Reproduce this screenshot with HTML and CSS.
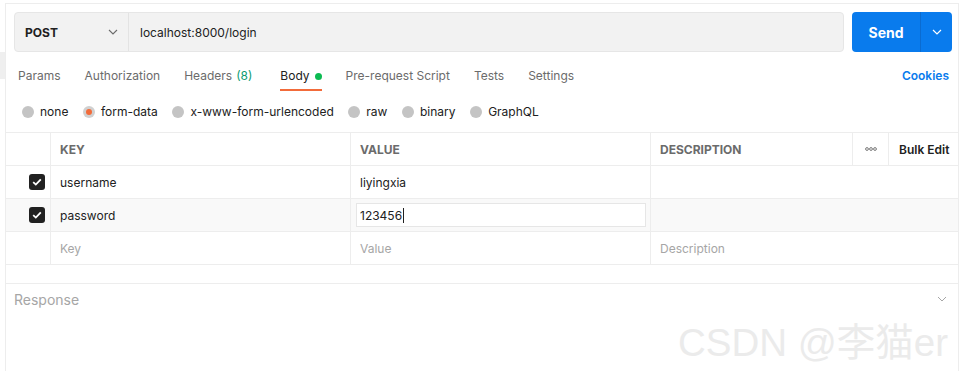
FILE: index.html
```html
<!DOCTYPE html>
<html lang="en">
<head>
<meta charset="utf-8">
<title>Postman request</title>
<link rel="stylesheet" href="styles.css">
</head>
<body>
<div class="app">
  <aside class="gutter"><div class="gutter-block"></div></aside>
  <main class="panel">
    <div class="url-row">
      <div class="url-bar">
        <div class="method">
          <span class="method-label">POST</span>
          <svg class="chev" width="10" height="6" viewBox="0 0 10 6"><path d="M1 1l4 4 4-4" fill="none" stroke="#6b6b6b" stroke-width="1.1"/></svg>
        </div>
        <div class="url">localhost:8000/login</div>
      </div>
      <div class="send">
        <span class="send-label">Send</span>
        <span class="send-arrow"><svg width="10" height="6" viewBox="0 0 10 6"><path d="M1 1l4 4 4-4" fill="none" stroke="#ffffff" stroke-width="1.2"/></svg></span>
      </div>
    </div>

    <nav class="tabs">
      <span class="tab">Params</span>
      <span class="tab">Authorization</span>
      <span class="tab tab-count">Headers <span class="count">(8)</span></span>
      <span class="tab tab-active">Body <span class="dot"></span></span>
      <span class="tab">Pre-request Script</span>
      <span class="tab">Tests</span>
      <span class="tab">Settings</span>
      <span class="cookies">Cookies</span>
    </nav>

    <div class="body-types">
      <label class="radio"><span class="circle"></span>none</label>
      <label class="radio"><span class="circle circle-on"></span>form-data</label>
      <label class="radio"><span class="circle"></span>x-www-form-urlencoded</label>
      <label class="radio"><span class="circle"></span>raw</label>
      <label class="radio"><span class="circle"></span>binary</label>
      <label class="radio"><span class="circle"></span>GraphQL</label>
    </div>

    <div class="kv">
      <div class="cell head"></div>
      <div class="cell head">KEY</div>
      <div class="cell head">VALUE</div>
      <div class="cell head">DESCRIPTION</div>
      <div class="cell head more">
        <svg width="12" height="4" viewBox="0 0 12 4"><circle cx="2" cy="2" r="1.4" fill="none" stroke="#6b6b6b" stroke-width="0.9"/><circle cx="6" cy="2" r="1.4" fill="none" stroke="#6b6b6b" stroke-width="0.9"/><circle cx="10" cy="2" r="1.4" fill="none" stroke="#6b6b6b" stroke-width="0.9"/></svg>
      </div>
      <div class="cell head bulk">Bulk Edit</div>

      <div class="cell check"><span class="box"><svg width="10" height="8" viewBox="0 0 10 8"><path d="M1.2 4.2l2.6 2.4L8.8 1.3" fill="none" stroke="#fff" stroke-width="1.8"/></svg></span></div>
      <div class="cell">username</div>
      <div class="cell">liyingxia</div>
      <div class="cell wide"></div>

      <div class="cell check hover"><span class="box"><svg width="10" height="8" viewBox="0 0 10 8"><path d="M1.2 4.2l2.6 2.4L8.8 1.3" fill="none" stroke="#fff" stroke-width="1.8"/></svg></span></div>
      <div class="cell hover">password</div>
      <div class="cell hover edit"><span class="input">123456<span class="caret"></span></span></div>
      <div class="cell wide hover"></div>

      <div class="cell"></div>
      <div class="cell ph">Key</div>
      <div class="cell ph">Value</div>
      <div class="cell wide ph">Description</div>
    </div>

    <div class="spacer"></div>

    <section class="response">
      <span class="response-label">Response</span>
      <svg width="10" height="6" viewBox="0 0 10 6"><path d="M1 1l4 4 4-4" fill="none" stroke="#a6a6a6" stroke-width="1"/></svg>
    </section>
  </main>
  <div class="watermark">CSDN @李猫er</div>
</div>
</body>
</html>
```

FILE: styles.css
```css
* { box-sizing: border-box; }
html, body { margin: 0; padding: 0; background: #ffffff; }
body {
  font-family: Inter, "Noto Sans", sans-serif;
  font-size: 12px;
  color: #212121;
  width: 965px;
  height: 371px;
  overflow: hidden;
}
.app { display: flex; position: relative; height: 371px; }
.gutter { width: 5px; flex: none; }
.gutter-block { margin-top: 52px; height: 27px; background: #efefef; }

.panel {
  width: 954px;
  flex: none;
  margin-top: 3px;
  border-top: 1px solid #ededed;
  border-left: 1px solid #ededed;
  border-right: 1px solid #ededed;
  display: flex;
  flex-direction: column;
}

.url-row { display: flex; gap: 8px; padding: 8px 6px 0 8px; }
.url-bar {
  flex: 1;
  height: 40px;
  display: flex;
  background: #f2f2f2;
  border: 1px solid #e6e6e6;
  border-radius: 4px;
}
.method {
  width: 114px;
  display: flex;
  align-items: center;
  justify-content: space-between;
  padding: 0 10px 0 10px;
  border-right: 1px solid #e3e3e3;
}
.method-label { font-weight: 700; font-size: 12px; color: #212121; }
.url { display: flex; align-items: center; padding-left: 11px; font-size: 12px; color: #212121; }

.send {
  width: 100px;
  height: 40px;
  display: flex;
  background: #097bed;
  border-radius: 4px;
  color: #fff;
}
.send-label { width: 68px; display: flex; align-items: center; justify-content: center; font-weight: 700; font-size: 14px; }
.send-arrow { flex: 1; display: flex; align-items: center; justify-content: center; border-left: 1px solid #0a6bd0; }

.tabs { display: flex; align-items: flex-end; padding: 8px 9px 0 12px; }
.tab {
  padding: 8px 0 5px;
  margin-right: 24px;
  line-height: 16px;
  font-size: 12px;
  color: #6b6b6b;
  border-bottom: 2px solid transparent;
  display: flex;
  align-items: center;
}
.tab-count { margin-right: 28px; }
.tab-active { color: #212121; border-bottom-color: #f26b3a; }
.count { color: #0c9c72; margin-left: 4px; }
.dot { width: 7px; height: 7px; border-radius: 50%; background: #0cbb52; margin-left: 5px; }
.cookies { margin-left: auto; padding-bottom: 7px; line-height: 16px; font-size: 12px; font-weight: 600; color: #097bed; }

.body-types { display: flex; align-items: center; padding: 13px 0 12px 16px; }
.radio { display: flex; align-items: center; line-height: 16px; font-size: 12px; color: #212121; margin-right: 14.6px; }
.circle { width: 12px; height: 12px; border-radius: 50%; background: #c4c4c4; margin-right: 6px; position: relative; }
.circle-on { background: #d0d0d0; }
.circle-on::after {
  content: "";
  position: absolute;
  left: 3px; top: 3px;
  width: 6px; height: 6px;
  border-radius: 50%;
  background: #f26b3a;
}

.kv {
  display: grid;
  grid-template-columns: 45px 300px 300px 202px 36px 1fr;
  grid-auto-rows: 33px;
  border-top: 1px solid #ededed;
}
.cell {
  display: flex;
  align-items: center;
  padding-left: 9px;
  border-right: 1px solid #ededed;
  border-bottom: 1px solid #ededed;
  font-size: 12px;
  color: #212121;
}
.cell:last-child, .wide { border-right: none; }
.wide { grid-column: span 3; }
.head { font-weight: 700; font-size: 12px; color: #6b6b6b; }
.more { justify-content: center; padding-left: 0; }
.bulk { border-right: none; color: #212121; font-weight: 600; padding-left: 10px; }
.check { justify-content: flex-end; padding: 0 5px 0 0; }
.box { width: 16px; height: 16px; border-radius: 3px; background: #212121; display: flex; align-items: center; justify-content: center; }
.hover { background: #f9f9f9; }
.edit { padding-left: 5px; padding-right: 4px; }
.input {
  flex: 1;
  height: 24px;
  display: flex;
  align-items: center;
  padding-left: 3px;
  background: #fff;
  border: 1px solid #e6e6e6;
}
.caret { width: 1px; height: 15px; background: #212121; margin-left: 1px; }
.ph { color: #a6a6a6; }

.spacer { height: 19px; border-bottom: 1px solid #ededed; }
.response { display: flex; align-items: center; justify-content: space-between; padding: 6px 11px 0 8px; height: 24px; }
.response-label { font-size: 14px; color: #a6a6a6; }

.watermark {
  position: absolute;
  left: 678px;
  top: 311px;
  font-family: "Liberation Sans", "Noto Sans CJK SC", sans-serif;
  font-size: 38.5px;
  color: #ebebeb;
  white-space: nowrap;
}
```
